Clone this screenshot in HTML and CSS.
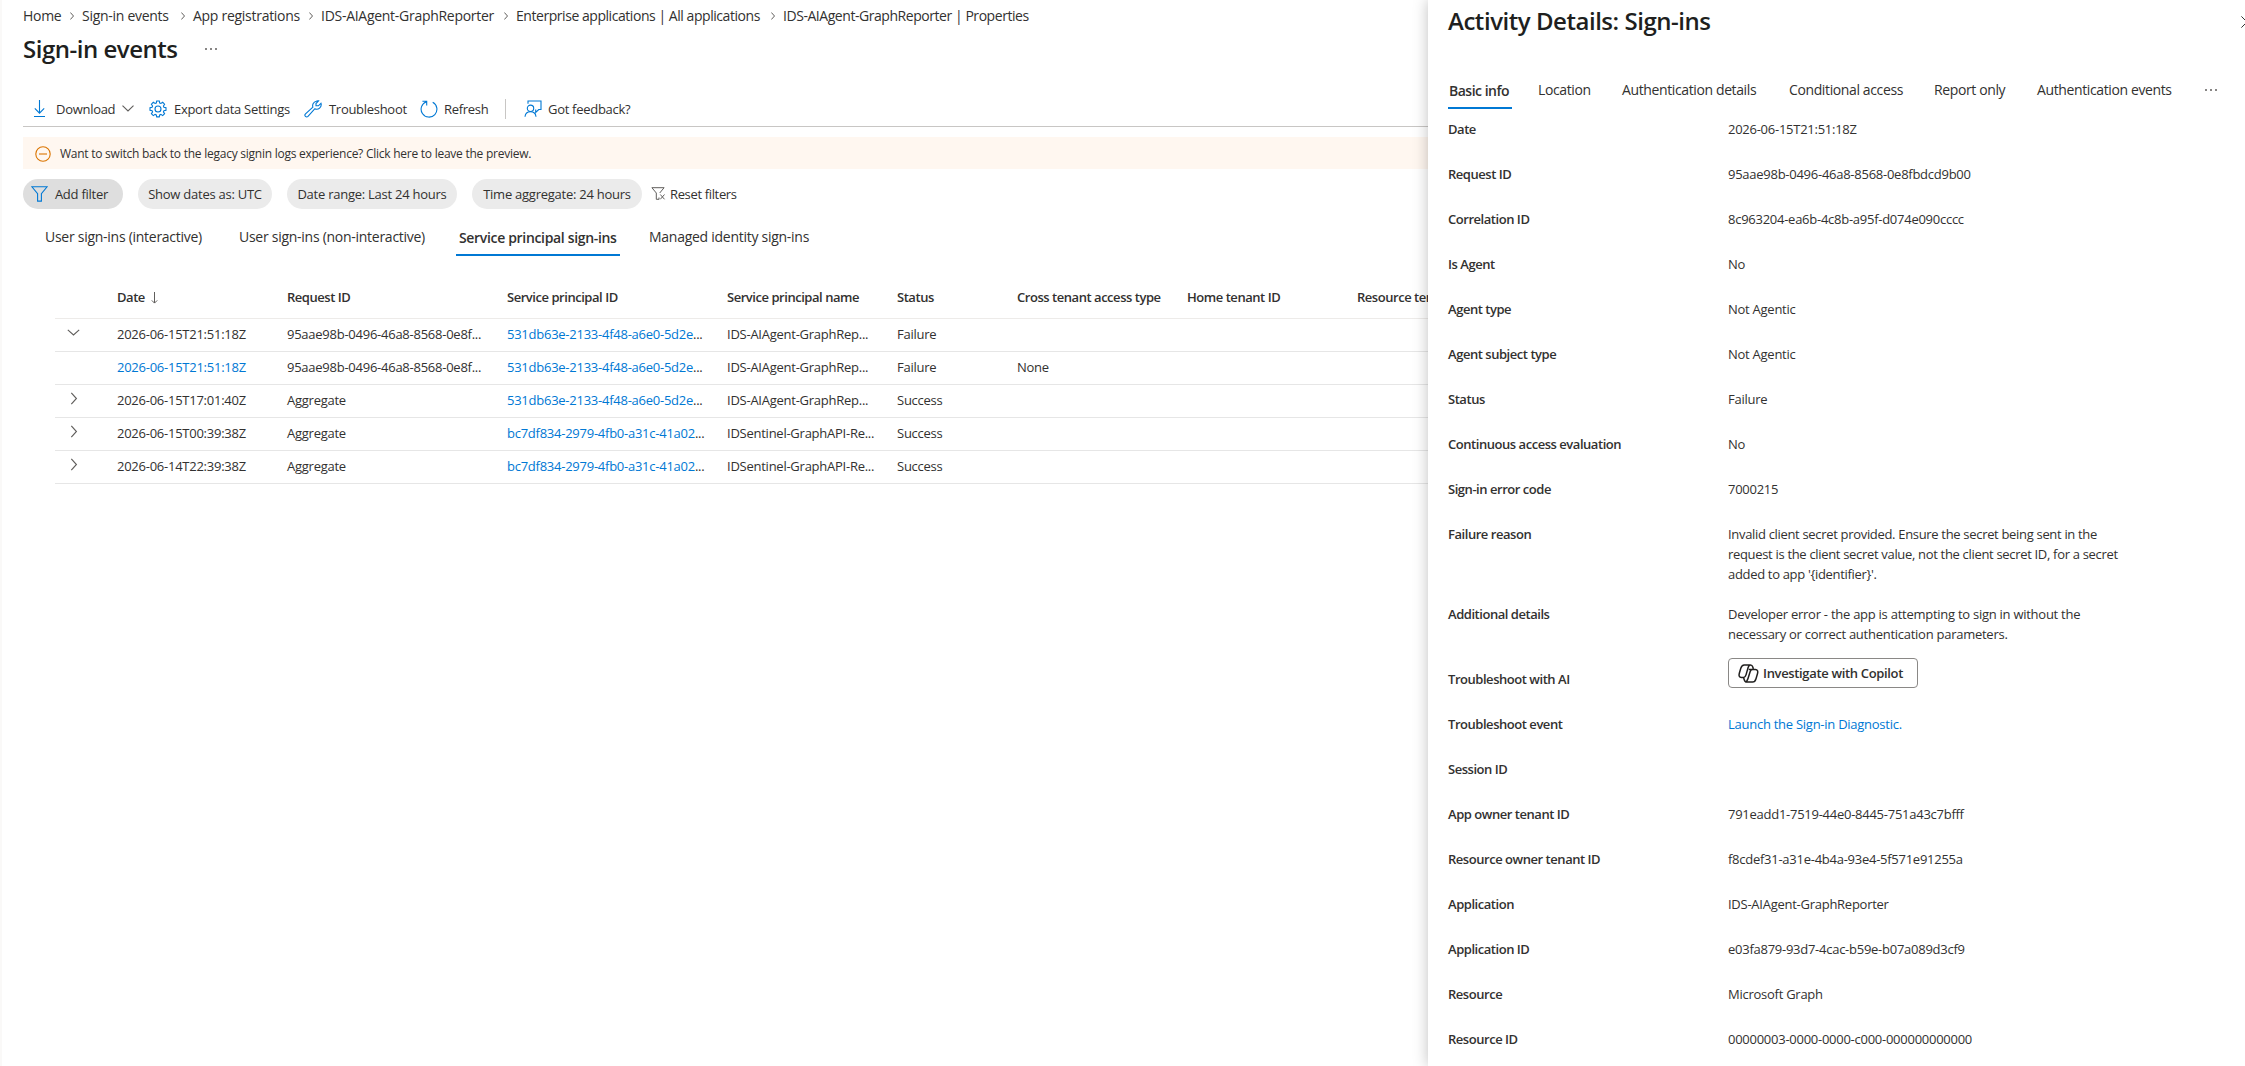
FILE: index.html
```html
<!DOCTYPE html>
<html lang="en">
  <head>
    <meta charset="UTF-8" />
    <meta name="viewport" content="width=device-width, initial-scale=1.0" />
    <title>Sign-in events</title>
    <link rel="stylesheet" href="styles.css">
  </head>

  <body>
    <svg class="sprite">
      <symbol id="chevron-right" viewBox="0 0 8 16">
        <path d="M.7 1l6.3 7-6.3 7" />
      </symbol>
      <symbol id="chevron-down" viewBox="0 0 16 8">
        <path d="M1 .7l7 6.3 7-6.3" />
      </symbol>
      <symbol id="dots" viewBox="0 0 14 4">
        <circle cx="2" cy="2" r="1" />
        <circle cx="7" cy="2" r="1" />
        <circle cx="12" cy="2" r="1" />
      </symbol>
    </svg>

    <main>
      <nav class="breadcrumb">
        <a>Home <svg><use href="#chevron-right" /></svg></a>
        <a>Sign-in events <svg><use href="#chevron-right" /></svg></a>
        <a>App registrations <svg><use href="#chevron-right" /></svg></a>
        <a>IDS-AIAgent-GraphReporter <svg><use href="#chevron-right" /></svg></a>
        <a class="tight">Enterprise applications | All applications <svg><use href="#chevron-right" /></svg></a>
        <a class="tight">IDS-AIAgent-GraphReporter | Properties</a>
      </nav>

      <header class="title">
        <h1>Sign-in events</h1>
        <svg class="dots"><use href="#dots" /></svg>
      </header>

      <div class="toolbar">
        <button class="download">
          <svg width="13" height="18" viewBox="0 0 13 18"><path d="M6.5 0v13M1.8 8.4l4.7 4.7 4.7-4.7M1 16.5h11" /></svg>
          <span>Download</span>
          <svg class="arrow" width="12" height="7" viewBox="0 0 12 7"><path d="M.5.6L6 6 11.5.6" /></svg>
        </button>
        <button class="export">
          <svg width="18" height="18" viewBox="0 0 18 18">
            <path d="M7.7 1h2.6l.4 2 1.2.5 1.8-1.2 1.9 1.9-1.2 1.8.5 1.2 2.1.4v2.7l-2.1.4-.5 1.2 1.2 1.8-1.9 1.9-1.8-1.2-1.2.5-.4 2H7.7l-.4-2-1.2-.5-1.8 1.2-1.9-1.9 1.2-1.8-.5-1.2-2.1-.4V7.600l2.100-.4.5-1.200-1.200-1.800 1.900-1.900 1.800 1.200 1.200-.5z" />
            <circle cx="9" cy="9" r="3" />
          </svg>
          <span>Export data Settings</span>
        </button>
        <button class="troubleshoot">
          <svg width="18" height="18" viewBox="0 0 18 18"><path d="M12.2 1.200a4.500 4.500 0 0 1 2.300-.3L12 3.500v2.300h2.400l2.600-2.500a4.600 4.600 0 0 1-6.300 5.500L4 16.400a1.700 1.700 0 0 1-2.500-2.500l7.400-6.700a4.600 4.600 0 0 1 3.300-6z" /></svg>
          <span>Troubleshoot</span>
        </button>
        <button class="refresh">
          <svg width="18" height="18" viewBox="0 0 18 18"><path d="M6.500 1.700a7.900 7.900 0 1 0 6.200.5M2.400 1.200h4.300v4.400" /></svg>
          <span>Refresh</span>
        </button>
        <span class="divider"></span>
        <button class="feedback">
          <svg width="18" height="18" viewBox="0 0 18 18"><path d="M4 3.800V1h13v8.500h-2.300l-3 2.900V9.500M1 16.800c.3-3.200 2.400-5 5.500-5s5.200 1.800 5.500 5" /><circle cx="6.500" cy="8.300" r="3.200" /></svg>
          <span>Got feedback?</span>
        </button>
      </div>

      <div class="banner">
        <svg width="16" height="16" viewBox="0 0 16 16"><circle cx="8" cy="8" r="7.2" /><path d="M4 8h8" /></svg>
        <span>Want to switch back to the legacy signin logs experience? Click here to leave the preview.</span>
      </div>

      <div class="filters">
        <button class="pill add">
          <svg width="17" height="16" viewBox="0 0 17 16"><path d="M.9.8h15.200L10.400 7.700v7.400H6.600V7.700z" /></svg>
          <span>Add filter</span>
        </button>
        <button class="pill dates">Show dates as: UTC</button>
        <button class="pill range">Date range: Last 24 hours</button>
        <button class="pill time">Time aggregate: 24 hours</button>
        <button class="reset">
          <svg width="15" height="13" viewBox="0 0 15 13"><path d="M8 10.500v1.800H5.300V6L.9.700h12.200L8.700 6M9.300 7.500l4.200 4.800M13.500 7.500l-4.200 4.800" /></svg>
          <span>Reset filters</span>
        </button>
      </div>

      <nav class="tabs">
        <a>User sign-ins (interactive)</a>
        <a>User sign-ins (non-interactive)</a>
        <a class="active">Service principal sign-ins</a>
        <a>Managed identity sign-ins</a>
      </nav>

      <table class="grid">
        <colgroup>
          <col class="c-toggle"><col class="c-date"><col class="c-id"><col class="c-id"><col class="c-name"><col class="c-status"><col class="c-name"><col class="c-name"><col>
        </colgroup>
        <thead>
          <tr>
            <th></th>
            <th>Date <svg class="sort" width="7" height="12" viewBox="0 0 7 12"><path d="M3.500 0v11M.8 8.400l2.700 2.700 2.700-2.700" /></svg></th>
            <th>Request ID</th>
            <th>Service principal ID</th>
            <th>Service principal name</th>
            <th>Status</th>
            <th>Cross tenant access type</th>
            <th>Home tenant ID</th>
            <th>Resource tenant ID</th>
          </tr>
        </thead>
        <tbody>
          <tr>
            <td><svg class="down"><use href="#chevron-down" /></svg></td>
            <td>2026-06-15T21:51:18Z</td>
            <td>95aae98b-0496-46a8-8568-0e8f...</td>
            <td><a>531db63e-2133-4f48-a6e0-5d2e</a>...</td>
            <td>IDS-AIAgent-GraphRep...</td>
            <td>Failure</td>
            <td></td><td></td><td></td>
          </tr>
          <tr>
            <td></td>
            <td><a>2026-06-15T21:51:18Z</a></td>
            <td>95aae98b-0496-46a8-8568-0e8f...</td>
            <td><a>531db63e-2133-4f48-a6e0-5d2e</a>...</td>
            <td>IDS-AIAgent-GraphRep...</td>
            <td>Failure</td>
            <td>None</td><td></td><td></td>
          </tr>
          <tr>
            <td><svg class="right"><use href="#chevron-right" /></svg></td>
            <td>2026-06-15T17:01:40Z</td>
            <td>Aggregate</td>
            <td><a>531db63e-2133-4f48-a6e0-5d2e</a>...</td>
            <td>IDS-AIAgent-GraphRep...</td>
            <td>Success</td>
            <td></td><td></td><td></td>
          </tr>
          <tr>
            <td><svg class="right"><use href="#chevron-right" /></svg></td>
            <td>2026-06-15T00:39:38Z</td>
            <td>Aggregate</td>
            <td><a>bc7df834-2979-4fb0-a31c-41a02</a>...</td>
            <td>IDSentinel-GraphAPI-Re...</td>
            <td>Success</td>
            <td></td><td></td><td></td>
          </tr>
          <tr>
            <td><svg class="right"><use href="#chevron-right" /></svg></td>
            <td>2026-06-14T22:39:38Z</td>
            <td>Aggregate</td>
            <td><a>bc7df834-2979-4fb0-a31c-41a02</a>...</td>
            <td>IDSentinel-GraphAPI-Re...</td>
            <td>Success</td>
            <td></td><td></td><td></td>
          </tr>
        </tbody>
      </table>
    </main>

    <aside class="panel">
      <header>
        <h2>Activity Details: Sign-ins</h2>
        <svg class="close" width="12" height="12" viewBox="0 0 12 12"><path d="M.4.4l11.200 11.200M11.600.4L.4 11.600" /></svg>
      </header>

      <nav class="panel-tabs">
        <a class="active">Basic info</a>
        <a>Location</a>
        <a>Authentication details</a>
        <a>Conditional access</a>
        <a>Report only</a>
        <a>Authentication events</a>
        <svg class="dots"><use href="#dots" /></svg>
      </nav>

      <dl>
        <dt>Date</dt>
        <dd>2026-06-15T21:51:18Z</dd>
        <dt>Request ID</dt>
        <dd>95aae98b-0496-46a8-8568-0e8fbdcd9b00</dd>
        <dt>Correlation ID</dt>
        <dd>8c963204-ea6b-4c8b-a95f-d074e090cccc</dd>
        <dt>Is Agent</dt>
        <dd>No</dd>
        <dt>Agent type</dt>
        <dd>Not Agentic</dd>
        <dt>Agent subject type</dt>
        <dd>Not Agentic</dd>
        <dt>Status</dt>
        <dd>Failure</dd>
        <dt>Continuous access evaluation</dt>
        <dd>No</dd>
        <dt>Sign-in error code</dt>
        <dd>7000215</dd>
        <dt>Failure reason</dt>
        <dd class="reason">Invalid client secret provided. Ensure the secret being sent in the<br>request is the client secret value, not the client secret ID, for a secret<br>added to app '{identifier}'.</dd>
        <dt>Additional details</dt>
        <dd>Developer error - the app is attempting to sign in without the<br>necessary or correct authentication parameters.</dd>
        <dt>Troubleshoot with AI</dt>
        <dd class="action">
          <button class="copilot">
            <svg width="21" height="19" viewBox="0 0 21 19"><path d="M6.200 1h6.300c1.300 0 1.900.8 2.300 2l.5 1.800M6.200 1C4.300 1 3.400 2.300 2.800 4.300L1.400 9c-.8 2.800-.2 4.400 2 4.400h2.200M6.200 13.400h-.6l.6 2.400c.3 1.300 1 2.200 2.400 2.200h6c1.900 0 2.800-1.300 3.400-3.300l1.400-4.700c.8-2.800.2-4.400-2-4.400h-2.700c-1.400 0-2.100.8-2.500 2L10 14.400c-.8 2.500-1.400 3.600-3 3.600M12.500 1c-1.300 0-1.900.9-2.300 2.200L8 10.900c-.5 1.700-1.100 2.500-2.400 2.500M10.800 5.600h4" /></svg>
            Investigate with Copilot
          </button>
        </dd>
        <dt>Troubleshoot event</dt>
        <dd><a>Launch the Sign-in Diagnostic.</a></dd>
        <dt>Session ID</dt>
        <dd></dd>
        <dt>App owner tenant ID</dt>
        <dd>791eadd1-7519-44e0-8445-751a43c7bfff</dd>
        <dt>Resource owner tenant ID</dt>
        <dd>f8cdef31-a31e-4b4a-93e4-5f571e91255a</dd>
        <dt>Application</dt>
        <dd>IDS-AIAgent-GraphReporter</dd>
        <dt>Application ID</dt>
        <dd>e03fa879-93d7-4cac-b59e-b07a089d3cf9</dd>
        <dt>Resource</dt>
        <dd>Microsoft Graph</dd>
        <dt>Resource ID</dt>
        <dd>00000003-0000-0000-c000-000000000000</dd>
      </dl>
    </aside>
  </body>
</html>
```
FILE: styles.css
```css
* {
  box-sizing: border-box;
  margin: 0;
  padding: 0;
}

body {
  display: flex;
  height: 1066px;
  overflow: hidden;
  font-family: "Segoe UI", "Open Sans", sans-serif;
  font-size: 13px;
  letter-spacing: -0.25px;
  color: #323130;
  background-color: #fff;
}

svg {
  flex: none;
  fill: none;
  stroke: #0078d4;
  stroke-width: 1.1;
}

.sprite {
  display: none;
}

button {
  display: flex;
  align-items: center;
  font: inherit;
  letter-spacing: inherit;
  color: inherit;
  background: none;
  border: none;
  white-space: nowrap;
}

a {
  color: inherit;
}

.dots {
  width: 14px;
  height: 4px;
  fill: #605e5c;
  stroke: none;
}

/* left side */
main {
  width: 1428px;
  flex: none;
  padding-left: 21px;
  border-left: 2px solid #faf9f8;
  overflow: hidden;
}

.breadcrumb {
  display: grid;
  grid-template-columns: 59px 111px 128px 195px 267px 260px;
  height: 31px;
  align-items: center;
  font-size: 14px;
  letter-spacing: -0.28px;
  white-space: nowrap;
}

.breadcrumb a {
  display: flex;
  align-items: center;
  justify-content: space-between;
  padding-right: 8px;
}

.breadcrumb .tight {
  letter-spacing: -0.45px;
}

.breadcrumb svg {
  width: 4px;
  height: 8px;
  stroke: #605e5c;
  stroke-width: 2;
}

.title {
  display: flex;
  align-items: center;
  gap: 26px;
  height: 36px;
}

.title h1 {
  margin-top: -2px;
  font-size: 24px;
  font-weight: 600;
  letter-spacing: -0.48px;
  color: #201f1e;
}

.toolbar {
  display: flex;
  align-items: center;
  height: 60px;
  padding: 24px 0 0 10px;
  border-bottom: 1px solid #c8c6c4;
}

.toolbar button {
  letter-spacing: -0.29px;
}

.toolbar .download {
  width: 116px;
  gap: 9px;
}

.toolbar .download span {
  margin-left: 1px;
}

.toolbar .arrow {
  margin-left: -2px;
  stroke: #605e5c;
}

.toolbar .export {
  width: 155px;
  gap: 7px;
}

.toolbar .troubleshoot {
  width: 116px;
  gap: 7px;
}

.toolbar .refresh {
  width: 85px;
  gap: 6px;
}

.toolbar .divider {
  width: 1px;
  height: 20px;
  margin-right: 18px;
  background-color: #c8c6c4;
}

.toolbar .feedback {
  gap: 6px;
}

.banner {
  display: flex;
  align-items: center;
  gap: 9px;
  height: 32px;
  margin-top: 10px;
  padding: 1px 0 0 12px;
  font-size: 12px;
  letter-spacing: -0.25px;
  background-color: #fff7f0;
}

.banner svg {
  stroke: #db7500;
}

.filters {
  display: flex;
  margin-top: 10px;
  height: 30px;
}

.pill {
  height: 30px;
  justify-content: center;
  margin-right: 15px;
  border-radius: 15px;
  background-color: #ebebeb;
}

.add {
  width: 100px;
  padding-right: 7px;
  gap: 7px;
  background-color: #dedede;
}

.dates {
  width: 134px;
}

.range {
  width: 170px;
}

.time {
  width: 170px;
  margin-right: 9px;
}

.reset {
  height: 29px;
  gap: 4px;
  letter-spacing: -0.35px;
}

.reset svg {
  stroke: #605e5c;
  stroke-width: 1;
}

.tabs {
  display: grid;
  grid-template-columns: 194px 219px 191px 200px;
  padding-left: 22px;
  margin-top: 16px;
  font-size: 14px;
  letter-spacing: -0.27px;
  line-height: 24px;
  white-space: nowrap;
}

.tabs a {
  justify-self: start;
  height: 31px;
}

.tabs .active {
  width: 164px;
  margin-left: -2px;
  padding: 1px 0 0 3px;
  font-weight: 600;
  letter-spacing: -0.33px;
  border-bottom: 2px solid #0078d4;
}

.grid {
  width: 1373px;
  margin: 22px 0 0 32px;
  table-layout: fixed;
  border-collapse: collapse;
  white-space: nowrap;
}

.c-toggle {
  width: 62px;
}

.c-date,
.c-name {
  width: 170px;
}

.c-id {
  width: 220px;
}

.c-status {
  width: 120px;
}

.grid th {
  height: 40px;
  padding-bottom: 2px;
  overflow: hidden;
  text-align: left;
  font-weight: 600;
  letter-spacing: -0.46px;
  border-bottom: 1px solid #edebe9;
}

.grid td {
  height: 33px;
  padding-bottom: 2px;
  font-size: 13px;
  border-bottom: 1px solid #e6e6e6;
}

.grid td:first-child svg {
  display: block;
  margin: -3px 0 0 12px;
  stroke: #605e5c;
  stroke-width: 1.4;
}

.grid .down {
  width: 13px;
  height: 7px;
}

.grid td:first-child .right {
  width: 8px;
  height: 13px;
  margin-left: 15px;
}

.grid .sort {
  margin-left: 3px;
  vertical-align: -2px;
  stroke: #605e5c;
  stroke-width: 1;
}

td a,
dd a {
  color: #0078d4;
}

/* details panel */
.panel {
  position: relative;
  flex: 1;
  padding-left: 20px;
  background-color: #fff;
  box-shadow: 0 0 14px rgba(0, 0, 0, 0.25);
}

.panel header {
  display: flex;
  align-items: center;
  justify-content: space-between;
  height: 44px;
  margin-right: -8px;
}

.panel h2 {
  margin-top: -3px;
  font-size: 24px;
  font-weight: 600;
  letter-spacing: -0.46px;
  color: #201f1e;
}

.close {
  stroke: #323130;
  stroke-width: 1;
}

.panel-tabs {
  display: grid;
  grid-template-columns: 90px 84px 167px 145px 103px 167px 14px;
  margin-top: 34px;
  font-size: 14px;
  letter-spacing: -0.38px;
  line-height: 24px;
  white-space: nowrap;
}

.panel-tabs a {
  justify-self: start;
  height: 31px;
}

.panel-tabs .active {
  width: 64px;
  padding: 1px 0 0 1px;
  font-weight: 600;
  letter-spacing: -0.5px;
  border-bottom: 2px solid #0078d4;
}

.panel-tabs .dots {
  margin-top: 10px;
}

.panel dl {
  display: grid;
  grid-template-columns: 280px 480px;
  row-gap: 25px;
  margin-top: 10px;
  line-height: 20px;
}

.panel dt,
.panel dd {
  min-height: 20px;
}

.panel dt {
  font-weight: 600;
  letter-spacing: -0.46px;
}

.panel dd {
  letter-spacing: -0.26px;
}

.panel .reason {
  margin-bottom: -5px;
  letter-spacing: -0.32px;
}

.panel .action {
  height: 20px;
}

.copilot {
  width: 190px;
  height: 30px;
  margin-top: -11px;
  padding-left: 9px;
  gap: 4px;
  font-weight: 600;
  letter-spacing: -0.34px;
  border: 1px solid #8a8886;
  border-radius: 4px;
}

.copilot svg {
  stroke: #201f1e;
  stroke-width: 1.5;
}
```
